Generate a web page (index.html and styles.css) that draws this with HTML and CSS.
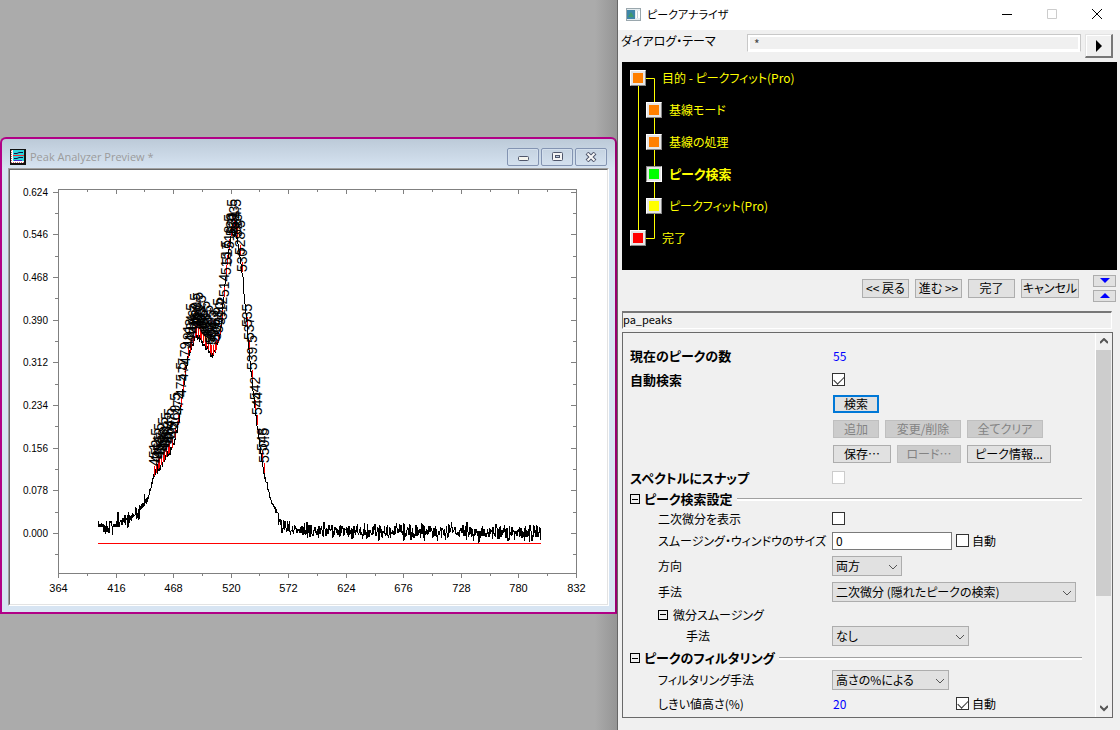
FILE: index.html
```
<!DOCTYPE html>
<html lang="ja">
<head>
    <meta charset="UTF-8">
    <meta name="viewport" content="width=device-width, initial-scale=1.0">
    <title>ピークアナライザ</title>
    <link rel="stylesheet" href="styles.css">
</head>
<body>
    <div class="desktop">
        <!-- Preview window -->
        <div class="workspace">
            <section class="preview">
                <header class="preview-title">
                    <svg class="preview-icon" width="16" height="16" viewBox="0 0 16 16">
                        <rect width="16" height="16" fill="#111"/>
                        <rect x="1" y="1" width="13" height="13" fill="#fff"/>
                        <rect x="3" y="1" width="11" height="11" fill="#2cd5dc"/>
                        <path d="M1.500 1v13M1 13.500h13" stroke="#c66" stroke-dasharray="1 1"/>
                        <path d="M3 6.500h11" stroke="#e33"/>
                        <path d="M4 4.500h3l2-1h4M4 9.500h3l2-1h4" stroke="#114" fill="none"/>
                        <path d="M4 11.500h8" stroke="#43c"/>
                    </svg>
                    <h1>Peak Analyzer Preview *</h1>
                    <div class="mdi-buttons">
                        <button type="button" aria-label="Minimize">
                            <svg width="12" height="10" viewBox="0 0 12 10"><rect x="1.500" y="4.500" width="10" height="4" rx="1" fill="#f4f4ee" stroke="#4f566b"/></svg>
                        </button>
                        <button type="button" aria-label="Maximize">
                            <svg width="12" height="10" viewBox="0 0 12 10"><rect x="1.500" y="0.500" width="10" height="8" rx="1" fill="#f4f4f4" stroke="#4f566b"/><rect x="4.500" y="3.500" width="4" height="2" fill="#b9c8dc" stroke="#4f566b"/></svg>
                        </button>
                        <button type="button" aria-label="Close">
                            <svg width="12" height="10" viewBox="0 0 12 10"><path d="M2 1l8 8M10 1l-8 8" stroke="#4f566b" stroke-width="4"/><path d="M2.500 1.500l7 7M9.500 1.500l-7 7" stroke="#f8f8f8" stroke-width="2"/></svg>
                        </button>
                    </div>
                </header>
                <div class="preview-body">
                    <svg class="chart" id="chart" viewBox="10 170 597 434">
                        <g id="axes"></g>
                        <path class="base" d="M98 543.500H541"/>
                        <path class="curve" id="curve"/>
                        <path class="marks" id="marks"/>
                        <g id="peakLabels"></g>
                    </svg>
                </div>
            </section>
        </div>

        <!-- Peak analyzer dialog -->
        <main class="dialog">
            <header class="dialog-title">
                <svg width="15" height="13" viewBox="0 0 15 13">
                    <rect x="0.500" y="0.500" width="14" height="12" fill="#e4ebee" stroke="#9aa7ad"/>
                    <rect x="1" y="2" width="8" height="9" fill="#3f86a8"/>
                    <path d="M2 9l3-5 3 5z" fill="#3f9a6c"/>
                    <path d="M10 3h4v7h-4z" fill="#fff"/>
                    <path d="M11.500 3v7" stroke="#c3cdd3"/>
                </svg>
                <h2>ピークアナライザ</h2>
                <div class="win-buttons">
                    <button type="button" aria-label="最小化"><svg width="10" height="10"><path d="M0 5.500h10" stroke="#000"/></svg></button>
                    <button type="button" aria-label="最大化" disabled><svg width="10" height="10"><path d="M.5.5h9v9h-9z" stroke="#ccc" fill="none"/></svg></button>
                    <button type="button" aria-label="閉じる"><svg width="10" height="10"><path d="M0 0l10 10M10 0L0 10" stroke="#000"/></svg></button>
                </div>
            </header>

            <div class="theme">
                <label for="theme">ダイアログ・テーマ</label>
                <input id="theme" type="text" value="*" readonly>
                <button type="button" aria-label="テーマメニュー"><svg width="6" height="12"><path d="M0 0l6 6-6 6z"/></svg></button>
            </div>

            <nav class="tree">
                <svg class="tree-lines" width="40" height="192"><path d="M16.500 16v160M24 16.500h8.500v160H24" fill="none" stroke="#ff0"/></svg>
                <ul>
                    <li class="root"><button type="button" class="node orange" aria-labelledby="t1"></button><span id="t1">目的 - ピークフィット(Pro)</span></li>
                    <li><button type="button" class="node orange" aria-labelledby="t2"></button><span id="t2">基線モード</span></li>
                    <li><button type="button" class="node orange" aria-labelledby="t3"></button><span id="t3">基線の処理</span></li>
                    <li class="current"><button type="button" class="node green" aria-labelledby="t4"></button><span id="t4">ピーク検索</span></li>
                    <li><button type="button" class="node yellow" aria-labelledby="t5"></button><span id="t5">ピークフィット(Pro)</span></li>
                    <li class="root"><button type="button" class="node red" aria-labelledby="t6"></button><span id="t6">完了</span></li>
                </ul>
            </nav>

            <div class="wizard">
                <button type="button" class="btn">&lt;&lt; 戻る</button>
                <button type="button" class="btn">進む &gt;&gt;</button>
                <button type="button" class="btn">完了</button>
                <button type="button" class="btn wide">キャンセル</button>
                <div class="updown">
                    <button type="button" class="btn" aria-label="下へ"><svg width="10" height="5"><path d="M0 0h10L5 5z" fill="#00f"/></svg></button>
                    <button type="button" class="btn" aria-label="上へ"><svg width="10" height="5"><path d="M0 5h10L5 0z" fill="#00f"/></svg></button>
                </div>
            </div>

            <div class="panel-name">pa_peaks</div>

            <div class="panel">
                <form class="settings">
                    <div class="row"><b>現在のピークの数</b><output class="value">55</output></div>
                    <div class="row"><label class="strong" for="autoFind">自動検索</label><input id="autoFind" type="checkbox" checked></div>
                    <div class="row row-buttons"><span></span><div class="buttons"><button type="button" class="btn focus w46">検索</button></div></div>
                    <div class="row row-buttons"><span></span><div class="buttons">
                        <button type="button" class="btn w46" disabled>追加</button>
                        <button type="button" class="btn w76" disabled>変更/削除</button>
                        <button type="button" class="btn w76" disabled>全てクリア</button>
                    </div></div>
                    <div class="row row-buttons"><span></span><div class="buttons">
                        <button type="button" class="btn w58">保存…</button>
                        <button type="button" class="btn w64" disabled>ロード…</button>
                        <button type="button" class="btn w84">ピーク情報...</button>
                    </div></div>
                    <div class="row row-mid"><label class="strong" for="snap">スペクトルにスナップ</label><input id="snap" type="checkbox" disabled></div>

                    <h3 class="section row-short"><button type="button" class="fold" aria-label="折りたたむ"></button>ピーク検索設定</h3>
                    <div class="row row-short sub"><label for="deriv">二次微分を表示</label><input id="deriv" type="checkbox"></div>
                    <div class="row sub"><label for="winSize">スムージング・ウィンドウのサイズ</label>
                        <div class="pair"><input id="winSize" class="field" type="text" value="0"><label class="auto"><input type="checkbox">自動</label></div>
                    </div>
                    <div class="row row-tall sub"><label for="dir">方向</label>
                        <div class="select w70"><select id="dir"><option>両方</option></select><svg width="10" height="6"><path d="M1 1l4 4 4-4"/></svg></div>
                    </div>
                    <div class="row row-tall sub"><label for="method">手法</label>
                        <div class="select w244"><select id="method"><option>二次微分 (隠れたピークの検索)</option></select><svg width="10" height="6"><path d="M1 1l4 4 4-4"/></svg></div>
                    </div>
                    <div class="row row-short sub"><span class="group"><button type="button" class="fold" aria-label="折りたたむ"></button>微分スムージング</span></div>
                    <div class="row row-mid sub2"><label for="smooth">手法</label>
                        <div class="select w137"><select id="smooth"><option>なし</option></select><svg width="10" height="6"><path d="M1 1l4 4 4-4"/></svg></div>
                    </div>

                    <h3 class="section row-mid"><button type="button" class="fold" aria-label="折りたたむ"></button>ピークのフィルタリング</h3>
                    <div class="row row-mid sub"><label for="filter">フィルタリング手法</label>
                        <div class="select w117"><select id="filter"><option>高さの%による</option></select><svg width="10" height="6"><path d="M1 1l4 4 4-4"/></svg></div>
                    </div>
                    <div class="row row-tall sub"><span>しきい値高さ(%)</span>
                        <div class="pair"><output class="value limit">20</output><label class="auto"><input type="checkbox" checked>自動</label></div>
                    </div>
                </form>
                <div class="scrollbar">
                    <button type="button" aria-label="上へスクロール"><svg width="8" height="7"><path d="M0 5l4-4 4 4"/></svg></button>
                    <div class="thumb"></div>
                    <button type="button" aria-label="下へスクロール"><svg width="8" height="7"><path d="M0 1l4 4 4-4"/></svg></button>
                </div>
            </div>
        </main>
    </div>
    <script src="chart.js"></script>
</body>
</html>
```
FILE: styles.css
```
* {
    box-sizing: border-box;
}
body {
    margin: 0;
    font-family: "Noto Sans CJK JP", "Liberation Sans", sans-serif;
    font-size: 12px;
    line-height: 16px;
    font-feature-settings: "palt";
    color: #000;
}
button, input, select, output {
    font: inherit;
    font-feature-settings: inherit;
    color: inherit;
    margin: 0;
}
button {
    display: flex;
    align-items: center;
    justify-content: center;
    padding: 0;
    border: none;
    background: none;
    white-space: nowrap;
}
h1, h2, h3, ul {
    margin: 0;
    padding: 0;
    font-size: 12px;
}
.desktop {
    display: grid;
    grid-template-columns: 617fr 503fr;
    min-height: 100vh;
    background: #ababab;
}

/* preview window */
.workspace {
    padding-top: 137px;
    background: linear-gradient(to left, #959595, #ababab 22px);
}
.preview {
    border: 2px solid #b10086;
    border-right-color: #99006f;
    border-radius: 6px 6px 0 0;
    padding: 0 6px 6px;
    background: linear-gradient(#bccad8, #d7e4f2 30px);
}
.preview-title {
    display: flex;
    align-items: center;
    height: 29px;
    padding: 6px 2px 0 2px;
}
.preview-title h1 {
    flex: 1;
    margin-left: 4px;
    font-family: "Open Sans", "Noto Sans", sans-serif;
    font-size: 11px;
    font-weight: normal;
    color: #9b9b9b;
}
.mdi-buttons {
    display: flex;
    gap: 2px;
}
.mdi-buttons button {
    width: 32px;
    height: 18px;
    border: 1px solid #8394b2;
    border-radius: 2px;
    box-shadow: inset 0 0 0 1px #d3dfec;
}
.preview-body {
    border: 1px solid #a0a0a0;
    border-right-color: #fff;
    border-bottom-color: #fff;
    background: #fff;
}
.chart {
    display: block;
    width: 100%;
    border: 1px solid #696969;
    border-right-color: #e3e3e3;
    border-bottom-color: #e3e3e3;
    font-family: "Liberation Sans", sans-serif;
    font-size: 11px;
}
.chart path {
    fill: none;
    shape-rendering: crispEdges;
}
.chart .tick-y {
    font-size: 10px;
}
.chart .axis {
    stroke: #808080;
}
.base, .marks {
    stroke: #f00;
}
.curve {
    stroke: #000;
}
.peak {
    font-size: 14px;
}

/* dialog */
.dialog {
    display: flex;
    flex-direction: column;
    border-left: 1px solid #666;
    background: #f0f0f0;
}
.dialog-title {
    display: flex;
    align-items: center;
    height: 30px;
    padding: 0 1px 2px 8px;
    background: #fff;
}
.dialog-title h2 {
    flex: 1;
    margin-left: 6px;
    font-size: 11px;
    font-weight: normal;
}
.win-buttons {
    display: flex;
}
.win-buttons button {
    width: 45px;
    height: 28px;
}
.theme {
    display: flex;
    height: 32px;
    padding: 4px 7px 4px 3px;
}
.theme label {
    width: 126px;
    line-height: 14px;
}
.theme input {
    flex: 1;
    min-width: 0;
    height: 18px;
    padding: 0 6px;
    border: 1px solid #c8c8c8;
    border-bottom-color: #fff;
    background: #f0f0f0;
    box-shadow: inset 0 0 0 2px #fff;
    color: #444;
}
.theme button {
    width: 28px;
    height: 24px;
    margin-left: 4px;
    border: 1px solid #e3e3e3;
    border-right: 2px solid #777;
    border-bottom: 2px solid #777;
    box-shadow: inset 1px 1px 0 #fff;
}
.tree {
    position: relative;
    height: 208px;
    margin: 0 3px 0 4px;
    background: #000;
    color: #ff0;
}
.tree-lines {
    position: absolute;
    left: 0;
    top: 0;
}
.tree ul {
    position: relative;
    list-style: none;
}
.tree li {
    display: flex;
    align-items: center;
    gap: 7px;
    height: 32px;
    padding-left: 24px;
}
.tree li.root {
    padding-left: 8px;
}
.tree li.root span {
    margin-left: 9px;
}
.tree li.current {
    font-size: 13px;
    font-weight: bold;
}
.node {
    width: 16px;
    height: 16px;
    border: 1px solid #fff;
    border-right-color: #888;
    border-bottom-color: #888;
    box-shadow: inset 0 0 0 2px #e6e6e6;
}
.orange {
    background: #ff8000;
}
.green {
    background: #0f0;
    border-color: #888 #fff #fff #888;
}
.yellow {
    background: #ff0;
}
.red {
    background: #f00;
}
.btn {
    width: 47px;
    height: 18px;
    border: 1px solid #adadad;
    background: #e1e1e1;
}
.btn:disabled {
    border-color: #bfbfbf;
    background: #ccc;
    color: #838383;
}
.btn.focus {
    border: 2px solid #0078d7;
}
.wizard {
    display: flex;
    align-items: center;
    justify-content: flex-end;
    gap: 6px;
    height: 41px;
    padding: 0 4px 5px 0;
}
.wizard .wide {
    width: 58px;
}
.wizard > .btn {
    height: 19px;
}
.updown {
    display: flex;
    flex-direction: column;
    gap: 3px;
    margin-left: 8px;
}
.updown .btn {
    width: 23px;
    height: 12px;
}
.panel-name {
    height: 18px;
    margin: 0 8px 3px 4px;
    border: 1px solid #fff;
    border-top: 2px solid #777;
    border-left: 1px solid #777;
    font-size: 11px;
    line-height: 13px;
}
.panel {
    display: flex;
    margin: 0 7px 0 4px;
    border: 1px solid #696969;
}
.settings {
    flex: 1;
    padding-top: 11px;
}
.row {
    display: grid;
    grid-template-columns: 209px 1fr;
    align-items: center;
    height: 24px;
    padding-bottom: 1px;
    white-space: nowrap;
}
.row > :first-child {
    padding-left: 7px;
}
.sub > :first-child {
    padding-left: 35px;
}
.sub2 > :first-child {
    padding-left: 63px;
}
.row-short {
    height: 20px;
}
.row-mid {
    height: 22px;
}
.row-buttons {
    height: 25px;
}
.row-tall {
    height: 26px;
}
.row b, .strong, .section {
    font-size: 13px;
    font-weight: bold;
}
.value {
    padding-left: 1px;
    font-size: 12px;
    color: #00f;
}
.buttons {
    display: flex;
    gap: 6px;
    padding-left: 1px;
}
.w46 {
    width: 46px;
}
.w58 {
    width: 58px;
}
.w64 {
    width: 64px;
}
.w76 {
    width: 76px;
}
.w84 {
    width: 84px;
}
input[type="checkbox"] {
    appearance: none;
    display: grid;
    place-items: center;
    width: 13px;
    height: 13px;
    border: 1px solid #333;
    background: #fff;
}
input[type="checkbox"]:disabled {
    border-color: #ccc;
}
input[type="checkbox"]:checked::before {
    content: "";
    width: 9px;
    height: 5px;
    margin-bottom: 2px;
    border-left: 1px solid #333;
    border-bottom: 1px solid #333;
    transform: rotate(-45deg);
}
.pair {
    display: flex;
    align-items: center;
    gap: 4px;
}
.auto {
    display: flex;
    align-items: center;
    gap: 3px;
}
.field {
    width: 120px;
    height: 18px;
    padding: 0 3px;
    border: 1px solid #7a7a7a;
    background: #fff;
}
.limit {
    width: 120px;
}
.select {
    position: relative;
    height: 20px;
}
.select select {
    appearance: none;
    display: block;
    width: 100%;
    height: 20px;
    padding: 0 3px;
    border: 1px solid #adadad;
    border-radius: 0;
    background: #e1e1e1;
    line-height: 16px;
}
.select svg {
    position: absolute;
    right: 4px;
    top: 8px;
    pointer-events: none;
}
.select path, .scrollbar path {
    fill: none;
    stroke: #555;
}
.scrollbar path {
    stroke-width: 2px;
}
.w70 {
    width: 70px;
}
.w117 {
    width: 117px;
}
.w137 {
    width: 137px;
}
.w244 {
    width: 244px;
}
.section {
    display: flex;
    align-items: center;
    gap: 4px;
    padding: 0 13px 0 7px;
}
.section::after {
    content: "";
    flex: 1;
    height: 2px;
    border-top: 1px solid #a0a0a0;
    background: #fff;
}
.group {
    display: flex;
    align-items: center;
    gap: 5px;
}
.fold {
    width: 10px;
    height: 10px;
    border: 1px solid #000;
}
.fold::before {
    content: "";
    width: 6px;
    height: 1px;
    background: #000;
}
.scrollbar {
    display: flex;
    flex-direction: column;
    width: 17px;
    padding-right: 1px;
    border-left: 1px solid #fff;
}
.scrollbar button {
    height: 17px;
}
.thumb {
    height: 246px;
    margin-bottom: auto;
    background: #cdcdcd;
}
```
FILE: chart.js
```
const SVG = 'http://www.w3.org/2000/svg';
const LEFT = 58, RIGHT = 576, TOP = 189, BOTTOM = 573;
const axes = document.getElementById('axes');

function addLine(d) {
    const path = document.createElementNS(SVG, 'path');
    path.setAttribute('class', 'axis');
    path.setAttribute('d', d);
    axes.appendChild(path);
}

function addText(parent, text, attrs) {
    const el = document.createElementNS(SVG, 'text');
    for (const name in attrs) el.setAttribute(name, attrs[name]);
    el.textContent = text;
    parent.appendChild(el);
}

// frame and ticks
addLine(`M${LEFT + 0.5} ${TOP + 0.5}H${RIGHT + 0.5}V${BOTTOM + 0.5}H${LEFT + 0.5}Z`);
for (let i = 0; i <= 18; i++) {
    const x = Math.round(LEFT + i * (RIGHT - LEFT) / 18) + 0.5;
    const len = i % 2 ? 2 : 4;
    addLine(`M${x} ${BOTTOM}v${len + 1}M${x} ${TOP}v${len + 1}`);
    if (i % 2 === 0) {
        addText(axes, String(364 + i * 26), { x: x, y: 592, 'text-anchor': 'middle' });
    }
}
for (let i = -1; i <= 16; i++) {
    const y = Math.round(533 - i * 21.33) + 0.5;
    const len = i % 2 ? 3 : 5;
    addLine(`M${LEFT - len} ${y}h${len}M${RIGHT - len} ${y}h${len}`);
    if (i % 2 === 0) {
        addText(axes, (i * 0.039).toFixed(3), { class: 'tick-y', x: 48, y: y + 3.5, 'text-anchor': 'end' });
    }
}

// spectrum shape
const shape = [
    [98, 527], [110, 526], [120, 523], [130, 517], [140, 510], [148, 498], [154, 476],
    [160, 466], [166, 457], [172, 448], [176, 435], [180, 415], [185, 375], [188, 358],
    [192, 345], [196, 335], [200, 338], [204, 345], [208, 350], [212, 356], [216, 350],
    [220, 335], [222, 320], [225, 285], [228, 255], [231, 236], [234, 229], [237, 237],
    [240, 255], [243, 280], [246, 315], [249, 350], [252, 380], [255, 410], [258, 432],
    [261, 455], [264, 473], [268, 490], [272, 503], [277, 515], [283, 526], [290, 529],
    [310, 531], [541, 533]
];

function heightAt(x) {
    let i = 1;
    while (i < shape.length - 1 && shape[i][0] < x) i++;
    const [x0, y0] = shape[i - 1];
    const [x1, y1] = shape[i];
    return y0 + (y1 - y0) * (x - x0) / (x1 - x0);
}

let seed = 11;
function noise() {
    seed = (seed * 16807) % 2147483647;
    return seed / 2147483647 - 0.5;
}

let d = '';
for (let x = 98; x <= 541; x += 0.5) {
    const flat = x < 145 || x > 278;
    const y = heightAt(x) + (noise() + noise() + noise()) * (flat ? 8 : 4);
    d += (d ? 'L' : 'M') + x + ' ' + y.toFixed(1);
}
document.getElementById('curve').setAttribute('d', d);

// detected peaks
const peaks = [
    451, 452.5, 454, 455.5, 457, 458.5, 460, 461.5, 463, 464.5, 467, 469.5, 472, 475.5,
    477, 479, 481, 483, 484.5, 486, 487.5, 489, 490.5, 492, 493.5, 495, 496.5, 498,
    499.5, 501, 502.5, 504, 505.5, 507, 508.5, 510, 512, 514, 515.5, 517, 518.5, 520,
    521.5, 523, 524.5, 526, 528.5, 530, 535, 537, 539.5, 542, 544, 548, 550.5
];
const labels = document.getElementById('peakLabels');
let marks = '';
peaks.forEach(value => {
    const x = Math.round(LEFT + (value - 364) * (RIGHT - LEFT) / 468);
    const y = Math.round(heightAt(x));
    // labels sit closer to the curve around the main peak
    const gap = y < 330 ? 0 : 10;
    marks += `M${x + 0.5} ${y}v-10`;
    addText(labels, value, { class: 'peak', transform: `translate(${x + 5} ${y - gap}) rotate(-90)` });
});
document.getElementById('marks').setAttribute('d', marks);
```
